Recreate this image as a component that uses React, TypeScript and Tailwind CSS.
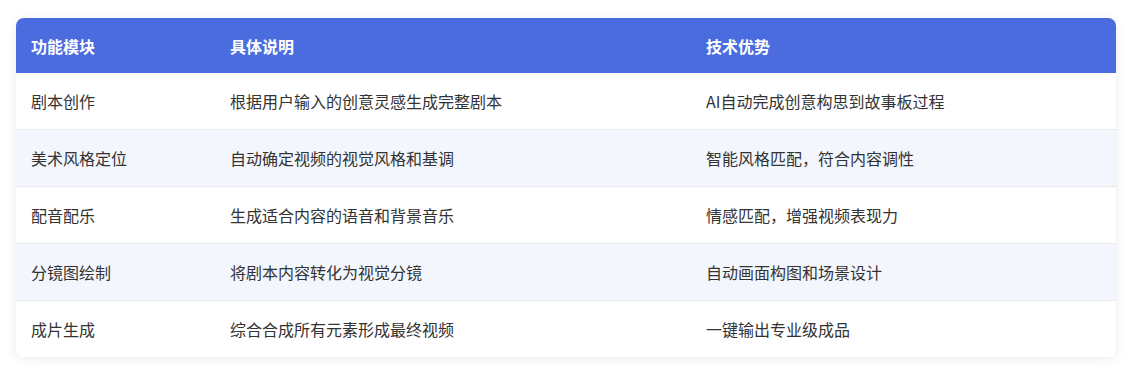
import * as React from "react"

const rows = [
  ["剧本创作", "根据用户输入的创意灵感生成完整剧本", "AI自动完成创意构思到故事板过程"],
  ["美术风格定位", "自动确定视频的视觉风格和基调", "智能风格匹配，符合内容调性"],
  ["配音配乐", "生成适合内容的语音和背景音乐", "情感匹配，增强视频表现力"],
  ["分镜图绘制", "将剧本内容转化为视觉分镜", "自动画面构图和场景设计"],
  ["成片生成", "综合合成所有元素形成最终视频", "一键输出专业级成品"],
]

export default function App() {
  return (
    <div
      className="w-[1133px] h-[384px] bg-white px-4 pt-[18px]"
      style={{ fontFamily: '"Noto Sans CJK SC", "Noto Sans", sans-serif' }}
    >
      <div className="w-[1100px] rounded-lg overflow-hidden bg-white shadow-[0_2px_12px_rgba(0,0,0,0.08)]">
        <div className="flex h-[55px] items-center bg-[#4a6cdf] text-white text-[16px] font-bold">
          <div className="w-[198px] pl-[15px]">功能模块</div>
          <div className="w-[476px] pl-[16px]">具体说明</div>
          <div className="flex-1 pl-[16px]">技术优势</div>
        </div>
        {rows.map((r, i) => (
          <div
            key={i}
            className={
              "flex items-center text-[16px] text-[#333333] " +
              (i % 2 === 1 ? "bg-[#f3f6fd] " : "bg-white ") +
              (i < rows.length - 1 ? "h-[57px] border-b border-[#e8e8e8]" : "h-[56px]")
            }
          >
            <div className="w-[198px] pl-[15px]">{r[0]}</div>
            <div className="w-[476px] pl-[16px]">{r[1]}</div>
            <div className="flex-1 pl-[16px]">{r[2]}</div>
          </div>
        ))}
      </div>
    </div>
  )
}
